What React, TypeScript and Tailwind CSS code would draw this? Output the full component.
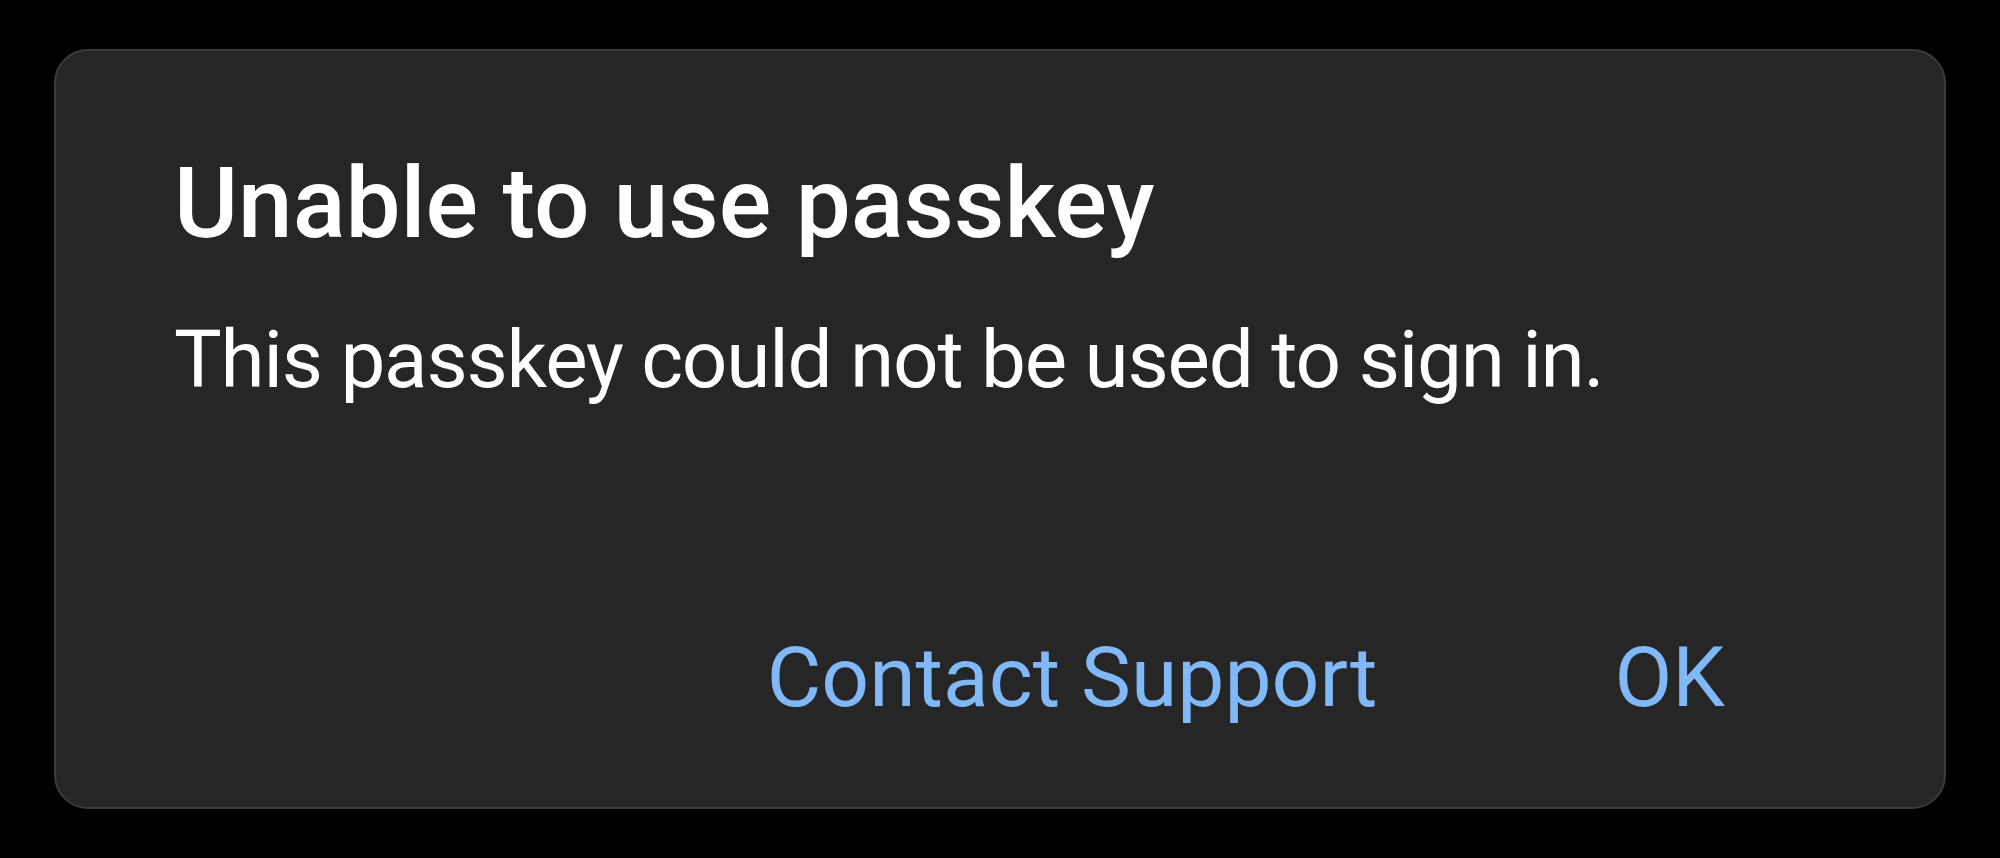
export default function App() {
  return (
    <div className="h-[858px] w-full bg-black flex items-center justify-center font-['Roboto',sans-serif]">
      <div className="w-[1892px] h-[760px] rounded-[34px] border-2 border-[#3b3b3b] bg-[#262626] flex flex-col pt-[94px] pl-[118px] pr-[219px]">
        <h1 className="text-[98px] leading-[118px] font-medium text-white">Unable to use passkey</h1>
        <p className="mt-[47px] text-[80px] leading-[100px] tracking-[-1.2px] text-white">
          This passkey could not be used to sign in.
        </p>
        <div className="mt-auto mb-[79px] flex justify-end items-center gap-[237px] text-[84px] leading-[100px] text-[#80b8f8]">
          <button className="cursor-pointer">Contact Support</button>
          <button className="cursor-pointer">OK</button>
        </div>
      </div>
    </div>
  );
}
